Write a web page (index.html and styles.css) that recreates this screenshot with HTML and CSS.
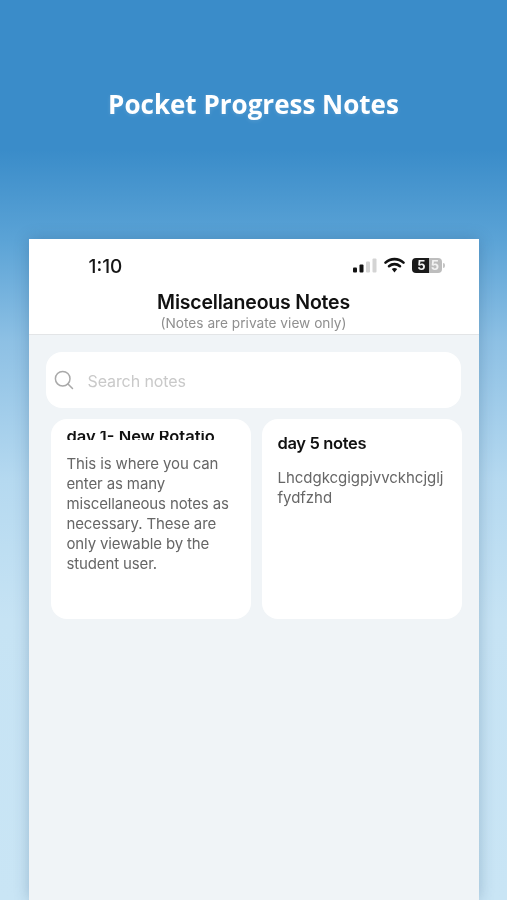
FILE: index.html
```html
<!DOCTYPE html>
<html lang="en">
<head>
<meta charset="utf-8">
<title>Pocket Progress Notes</title>
<link rel="stylesheet" href="styles.css">
</head>
<body>
<main class="screen">
  <h1 class="hero-title">Pocket Progress Notes</h1>
  <section class="phone">
    <header class="phone-head">
      <div class="status">
        <span class="time">1:10</span>
        <div class="status-icons">
          <svg class="signal" width="24" height="15" viewBox="0 0 24 15"><rect x="0" y="9.500" width="4" height="5" rx="1" fill="#111"/><rect x="6.500" y="6.500" width="4" height="8" rx="1" fill="#111"/><rect x="13" y="3.500" width="4" height="11" rx="1" fill="#d4d4d4"/><rect x="19.500" y="0.500" width="4" height="14" rx="1" fill="#d4d4d4"/></svg>
          <svg class="wifi" width="21" height="16" viewBox="0 0 21 16"><path d="M1.500 5.600C6.600.9 14.400.9 19.500 5.600" fill="none" stroke="#111" stroke-width="2.600" stroke-linecap="round"/><path d="M5 9.200c3.200-2.800 7.800-2.800 11 0" fill="none" stroke="#111" stroke-width="2.600" stroke-linecap="round"/><path d="M7.800 12c1.600-1.300 3.800-1.300 5.400 0l-2.700 3.400z" fill="#111"/></svg>
          <div class="battery"><span class="batt-fill">5</span><span class="batt-rest">5</span></div><span class="batt-cap"></span>
        </div>
      </div>
      <div class="head-title">Miscellaneous Notes</div>
      <div class="head-sub">(Notes are private view only)</div>
    </header>
    <div class="content">
      <div class="search">
        <svg class="search-icon" width="20" height="20" viewBox="0 0 20 20"><circle cx="8.700" cy="8.700" r="7.300" fill="none" stroke="#a9a9a9" stroke-width="1.500"/><path d="M14 14l4.500 4.500" stroke="#a9a9a9" stroke-width="1.500" stroke-linecap="round"/></svg>
        <span class="search-text">Search notes</span>
      </div>
      <div class="cards">
        <article class="card card-first">
          <div class="card-clip"><span>day 1- New Rotation</span></div>
          <p class="card-body">This is where you can enter as many miscellaneous notes as necessary. These are only viewable by the student user.</p>
        </article>
        <article class="card card-second">
          <h2 class="card-title">day 5 notes</h2>
          <p class="card-body card-break">Lhcdgkcgigpjvvckhcjgljfydfzhd</p>
        </article>
      </div>
    </div>
  </section>
</main>
</body>
</html>
```
FILE: styles.css
```css
* { box-sizing: border-box; }
html, body { margin: 0; padding: 0; }
body { width: 507px; height: 900px; overflow: hidden; font-family: Inter, "Liberation Sans", sans-serif; }
.screen {
  height: 900px;
  overflow: hidden;
  display: flex;
  flex-direction: column;
  align-items: center;
  background: linear-gradient(180deg, #3a8cc9 0, #3a8cc9 150px, #5ba3d6 240px, #8dc0e4 340px, #b5d9f0 480px, #c6e3f4 620px, #c9e5f5 900px);
  filter: blur(0.35px);
}
.hero-title {
  margin: 86px 0 0;
  height: 153px;
  font: 700 26px/36px "Open Sans", sans-serif;
  color: #fff;
  text-shadow: 0 1px 4px rgba(255,255,255,.15);
}
.phone {
  width: 450px;
  height: 661px;
  flex: none;
  background: #f0f4f7;
  box-shadow: 0 0 14px rgba(30,70,110,.28);
}
.phone-head {
  height: 96px;
  background: #fff;
  border-bottom: 1px solid #e3e5e7;
  text-align: center;
}
.status {
  height: 53px;
  display: flex;
  align-items: center;
  justify-content: space-between;
  padding: 0 33px 1px 60px;
}
.time { padding-top: 2px; font-size: 19px; font-weight: 500; color: #161616; }
.status-icons { display: flex; align-items: center; margin-right: 1px; }
.signal { margin-right: 1px; }
.wifi { margin-left: 6px; }
.battery {
  margin-left: 7px;
  width: 30px;
  height: 15px;
  border-radius: 4px;
  overflow: hidden;
  display: flex;
  font-size: 13px;
  font-weight: 700;
  line-height: 15px;
  text-align: center;
}
.batt-fill { width: 17px; background: #1a1a1a; color: #f2f2f2; padding-left: 3px; }
.batt-rest { width: 13px; background: #bdbdbd; color: #f2f2f2; }
.batt-cap { width: 2px; height: 5px; margin-left: 1px; background: #c4c4c4; border-radius: 0 2px 2px 0; }
.head-title { margin-top: -2px; font-size: 19.500px; font-weight: 600; letter-spacing: -0.2px; line-height: 24px; color: #111; }
.head-sub { font-size: 13.700px; line-height: 19px; color: #8f8f8f; }
.content { padding: 17px 17px 0 17px; }
.search {
  height: 56px;
  width: 415px;
  background: #fff;
  border-radius: 16px;
  display: flex;
  align-items: center;
  padding-left: 8px;
}
.search-text { margin-left: 14px; padding-top: 2px; font-size: 16px; letter-spacing: -0.1px; color: #c9c9c9; }
.cards { display: flex; gap: 11px; margin: 11px 0 0 5px; }
.card { width: 200px; height: 200px; background: #fff; border-radius: 16px; padding: 0 16px; }
.card-clip {
  margin-top: 12px;
  width: 149px;
  height: 9px;
  overflow: hidden;
  font-size: 16.500px;
  font-weight: 600;
  line-height: 20px;
  white-space: nowrap;
  color: #111;
}
.card-clip span { display: block; margin-top: -5px; }
.card-title { margin: 14px 0 0; font-size: 16.500px; font-weight: 600; letter-spacing: -0.35px; line-height: 20px; color: #111; }
.card-body { margin: 14px 0 0; font-size: 15px; letter-spacing: -0.13px; line-height: 20px; color: #666; }
.card-second .card-body { margin-top: 15px; }
.card-break { word-break: break-all; letter-spacing: -0.03px; }
```
